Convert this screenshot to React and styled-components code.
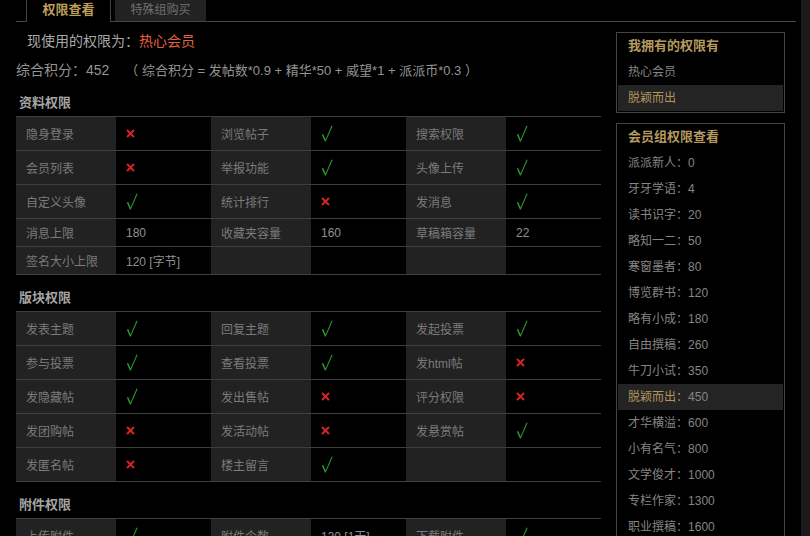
import styled, { createGlobalStyle } from 'styled-components';

const GlobalStyle = createGlobalStyle`
  html, body {
    margin: 0;
    padding: 0;
    background: #000;
    height: 536px;
    overflow: hidden;
  }
  body {
    font-family: "Liberation Sans", "Noto Sans CJK SC", sans-serif;
    color: #999;
  }
`;

const sections = [
  {
    title: '资料权限',
    rows: [
      { cells: [['隐身登录', 'no'], ['浏览帖子', 'yes'], ['搜索权限', 'yes']] },
      { cells: [['会员列表', 'no'], ['举报功能', 'yes'], ['头像上传', 'yes']] },
      { cells: [['自定义头像', 'yes'], ['统计排行', 'no'], ['发消息', 'yes']] },
      { short: true, cells: [['消息上限', '180'], ['收藏夹容量', '160'], ['草稿箱容量', '22']] },
      { short: true, cells: [['签名大小上限', '120 [字节]'], ['', ''], ['', '']] },
    ],
  },
  {
    title: '版块权限',
    rows: [
      { cells: [['发表主题', 'yes'], ['回复主题', 'yes'], ['发起投票', 'yes']] },
      { cells: [['参与投票', 'yes'], ['查看投票', 'yes'], ['发html帖', 'no']] },
      { cells: [['发隐藏帖', 'yes'], ['发出售帖', 'no'], ['评分权限', 'no']] },
      { cells: [['发团购帖', 'no'], ['发活动帖', 'no'], ['发悬赏帖', 'yes']] },
      { cells: [['发匿名帖', 'no'], ['楼主留言', 'yes'], ['', '']] },
    ],
  },
  {
    title: '附件权限',
    rows: [
      { cells: [['上传附件', 'yes'], ['附件个数', '130 [1天]'], ['下载附件', 'yes']] },
    ],
  },
];

const levels = [
  ['派派新人', 0],
  ['牙牙学语', 4],
  ['读书识字', 20],
  ['略知一二', 50],
  ['寒窗墨者', 80],
  ['博览群书', 120],
  ['略有小成', 180],
  ['自由撰稿', 260],
  ['牛刀小试', 350],
  ['脱颖而出', 450],
  ['才华横溢', 600],
  ['小有名气', 800],
  ['文学俊才', 1000],
  ['专栏作家', 1300],
  ['职业撰稿', 1600],
];

const Page = styled.div`
  display: flex;
  width: 810px;
  height: 536px;
  overflow: hidden;
`;
const Content = styled.div`
  width: 801px;
  padding-left: 16px;
  box-sizing: border-box;
`;
const Strip = styled.div`
  width: 9px;
  background: #1b1b1b;
`;

const TabBar = styled.div`
  display: flex;
  align-items: flex-start;
  width: 770px;
  height: 21px;
  padding-left: 10px;
  box-sizing: content-box;
  border-bottom: 1px solid #454545;
`;
const Tab = styled.div`
  height: ${({ $active }) => ($active ? '22px' : '21px')};
  line-height: 20px;
  text-align: center;
  font-size: ${({ $active }) => ($active ? '13px' : '12px')};
  font-weight: ${({ $active }) => ($active ? 'bold' : 'normal')};
  color: ${({ $active }) => ($active ? '#bd9f5c' : '#707070')};
  background: ${({ $active }) => ($active ? '#000' : '#222')};
  width: ${({ $active }) => ($active ? '83px' : '91px')};
  border-left: ${({ $active }) => ($active ? '1px solid #454545' : 'none')};
  border-right: ${({ $active }) => ($active ? '1px solid #454545' : 'none')};
  margin-right: 4px;
`;

const Body = styled.div`
  display: flex;
  gap: 15px;
`;
const Main = styled.div`
  width: 585px;
`;
const Current = styled.div`
  margin-top: 7px;
  padding-left: 11px;
  line-height: 24px;
  font-size: 14px;
  color: #a8a8a8;
`;
const Hot = styled.span`
  color: #e5613d;
`;
const Score = styled.div`
  margin-top: 7px;
  line-height: 20px;
  font-size: 14px;
  color: #949494;
  white-space: pre;
`;
const Formula = styled.span`
  margin-left: 16px;
  font-size: 13px;
`;
const SectionTitle = styled.div`
  margin-top: ${({ $first }) => ($first ? '12px' : '13px')};
  padding-left: 3px;
  line-height: 20px;
  font-size: 13px;
  font-weight: bold;
  color: #a5a5a5;
`;
const Table = styled.div`
  margin-top: 3px;
  border-bottom: 1px solid #3f3f3f;
`;
const Row = styled.div`
  display: grid;
  grid-template-columns: 100px 95px 100px 95px 100px 95px;
  height: ${({ $short }) => ($short ? '28px' : '34px')};
  border-top: 1px solid #3f3f3f;
  box-sizing: border-box;
`;
const Label = styled.div`
  display: flex;
  align-items: center;
  padding-left: 10px;
  background: #222;
  font-size: 12px;
  color: #7b7b7b;
`;
const Value = styled.div`
  display: flex;
  align-items: center;
  padding-left: 10px;
  font-size: 12px;
  color: #909090;
`;

const Check = () => (
  <svg width="12" height="17" viewBox="0 0 12 17">
    <path d="M0.8 9.5 L2.2 9 L4.6 14.5 L10.6 0.6 L11.6 1 L4.8 16.4 L3.9 16.4 Z" fill="#2c9a2f" />
  </svg>
);
const Cross = () => (
  <svg width="9" height="9" viewBox="0 0 9 9">
    <path d="M1 1 L8 8 M8 1 L1 8" stroke="#d42424" strokeWidth="2" />
  </svg>
);

const renderValue = (v) => {
  if (v === 'yes') return <Check />;
  if (v === 'no') return <Cross />;
  return v;
};

const Side = styled.div`
  margin-top: 10px;
  width: 169px;
  display: flex;
  flex-direction: column;
  gap: 10px;
`;
const Box = styled.div`
  border: 1px solid #454545;
  padding: 0 1px 1px;
`;
const BoxTitle = styled.div`
  line-height: 26px;
  padding-left: 10px;
  font-size: 13px;
  font-weight: bold;
  color: #b59a5f;
`;
const Item = styled.div`
  line-height: 26px;
  padding-left: 10px;
  font-size: 12px;
  color: #858585;
  background: ${({ $on }) => ($on ? '#242424' : 'transparent')};
`;
const ItemName = styled.span`
  color: ${({ $on }) => ($on ? '#b0955c' : 'inherit')};
`;

export default function App() {
  return (
    <Page>
      <GlobalStyle />
      <Content>
        <TabBar>
          <Tab $active>权限查看</Tab>
          <Tab>特殊组购买</Tab>
        </TabBar>
        <Body>
          <Main>
            <Current>
              现使用的权限为：<Hot>热心会员</Hot>
            </Current>
            <Score>
              综合积分：452
              <Formula>（ 综合积分 = 发帖数*0.9 + 精华*50 + 威望*1 + 派派币*0.3 ）</Formula>
            </Score>
            {sections.map((s, si) => (
              <div key={s.title}>
                <SectionTitle $first={si === 0}>{s.title}</SectionTitle>
                <Table>
                  {s.rows.map((r, ri) => (
                    <Row key={ri} $short={r.short}>
                      {r.cells.map(([label, v], ci) => [
                        <Label key={`l${ci}`}>{label}</Label>,
                        <Value key={`v${ci}`}>{renderValue(v)}</Value>,
                      ])}
                    </Row>
                  ))}
                </Table>
              </div>
            ))}
          </Main>
          <Side>
            <Box>
              <BoxTitle>我拥有的权限有</BoxTitle>
              <Item>热心会员</Item>
              <Item $on>
                <ItemName $on>脱颖而出</ItemName>
              </Item>
            </Box>
            <Box>
              <BoxTitle>会员组权限查看</BoxTitle>
              {levels.map(([name, n]) => (
                <Item key={name} $on={name === '脱颖而出'}>
                  <ItemName $on={name === '脱颖而出'}>{name}：</ItemName>
                  {n}
                </Item>
              ))}
            </Box>
          </Side>
        </Body>
      </Content>
      <Strip />
    </Page>
  );
}
